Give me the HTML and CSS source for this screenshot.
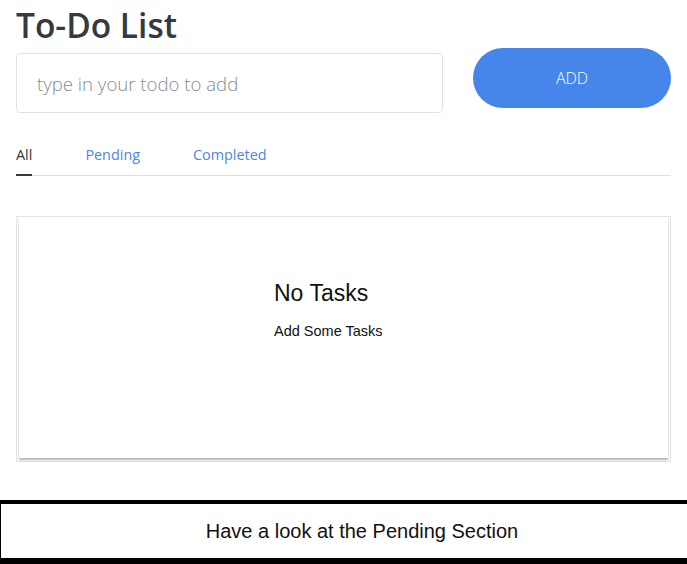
FILE: index.html
```html
<!DOCTYPE html>
<html lang="en">
<head>
<meta charset="utf-8">
<title>To-Do List</title>
<link rel="stylesheet" href="styles.css">
</head>
<body>
<main class="app">
  <h1 class="title">To-Do List</h1>
  <div class="add-row">
    <input class="todo-input" type="text" placeholder="type in your todo to add">
    <button class="add-btn" type="button">ADD</button>
  </div>
  <nav class="tabs">
    <a class="tab active">All</a>
    <a class="tab">Pending</a>
    <a class="tab">Completed</a>
  </nav>
  <section class="card">
    <div class="card-inner">
      <div class="empty">
        <h2 class="empty-title">No Tasks</h2>
        <p class="empty-sub">Add Some Tasks</p>
      </div>
    </div>
  </section>
</main>
<footer class="hint">Have a look at the Pending Section</footer>
</body>
</html>
```
FILE: styles.css
```css
html, body {
  margin: 0;
  padding: 0;
  background: #ffffff;
  overflow: hidden;
}
body {
  font-family: "Open Sans", "Liberation Sans", sans-serif;
}
.app {
  padding: 0 16px;
}
.title {
  margin: 3px 0 0;
  font-size: 33.5px;
  line-height: 44px;
  font-weight: 600;
  color: #343a40;
}
.add-row {
  display: flex;
  align-items: flex-start;
  gap: 30px;
  margin-top: 1px;
}
.todo-input {
  box-sizing: border-box;
  width: 427px;
  height: 60px;
  margin-top: 5px;
  padding: 0 20px;
  border: 1px solid #e2e2e2;
  border-radius: 4px;
  font-family: "Open Sans", sans-serif;
  font-size: 18.6px;
  font-weight: 300;
  color: #333;
  outline: none;
}
.todo-input::placeholder {
  color: #868b90;
}
.add-btn {
  width: 198px;
  height: 60px;
  border: none;
  border-radius: 30px;
  background: #4685ea;
  color: #ffffff;
  font-family: "Open Sans", sans-serif;
  font-size: 16px;
  font-weight: 300;
  padding: 0;
}
.tabs {
  display: flex;
  gap: 53px;
  margin-top: 31px;
  border-bottom: 1px solid #dedede;
}
.tab {
  font-size: 14.4px;
  line-height: 19px;
  color: #4a86e8;
  padding-top: 1px;
  padding-bottom: 10px;
  border-bottom: 2px solid transparent;
  margin-bottom: -1px;
}
.tab.active {
  color: #343a40;
  border-bottom-color: #343a40;
}
.card {
  margin-top: 40px;
  width: 655px;
  box-sizing: border-box;
  height: 246px;
  border: 1px solid #e3e3e3;
  padding: 0 2px 3px;
}
.card-inner {
  height: 100%;
  background: #fff;
  box-shadow: 0 2px 2px rgba(0, 0, 0, 0.3);
}
.empty {
  padding: 63px 0 0 255px;
  font-family: "Liberation Sans", Arial, sans-serif;
  color: #111;
}
.empty-title {
  margin: 0;
  font-size: 23px;
  font-weight: 400;
  line-height: 26px;
}
.empty-sub {
  margin: 17px 0 0;
  font-size: 14.5px;
  line-height: 17px;
}
.hint {
  margin-top: 38px;
  box-sizing: border-box;
  height: 64px;
  border-top: 4px solid #000;
  border-bottom: 6px solid #000;
  border-left: 1px solid #000;
  padding-left: 36px;
  text-align: center;
  font-family: "Liberation Sans", Arial, sans-serif;
  font-size: 20px;
  line-height: 54px;
  color: #111;
}
```
